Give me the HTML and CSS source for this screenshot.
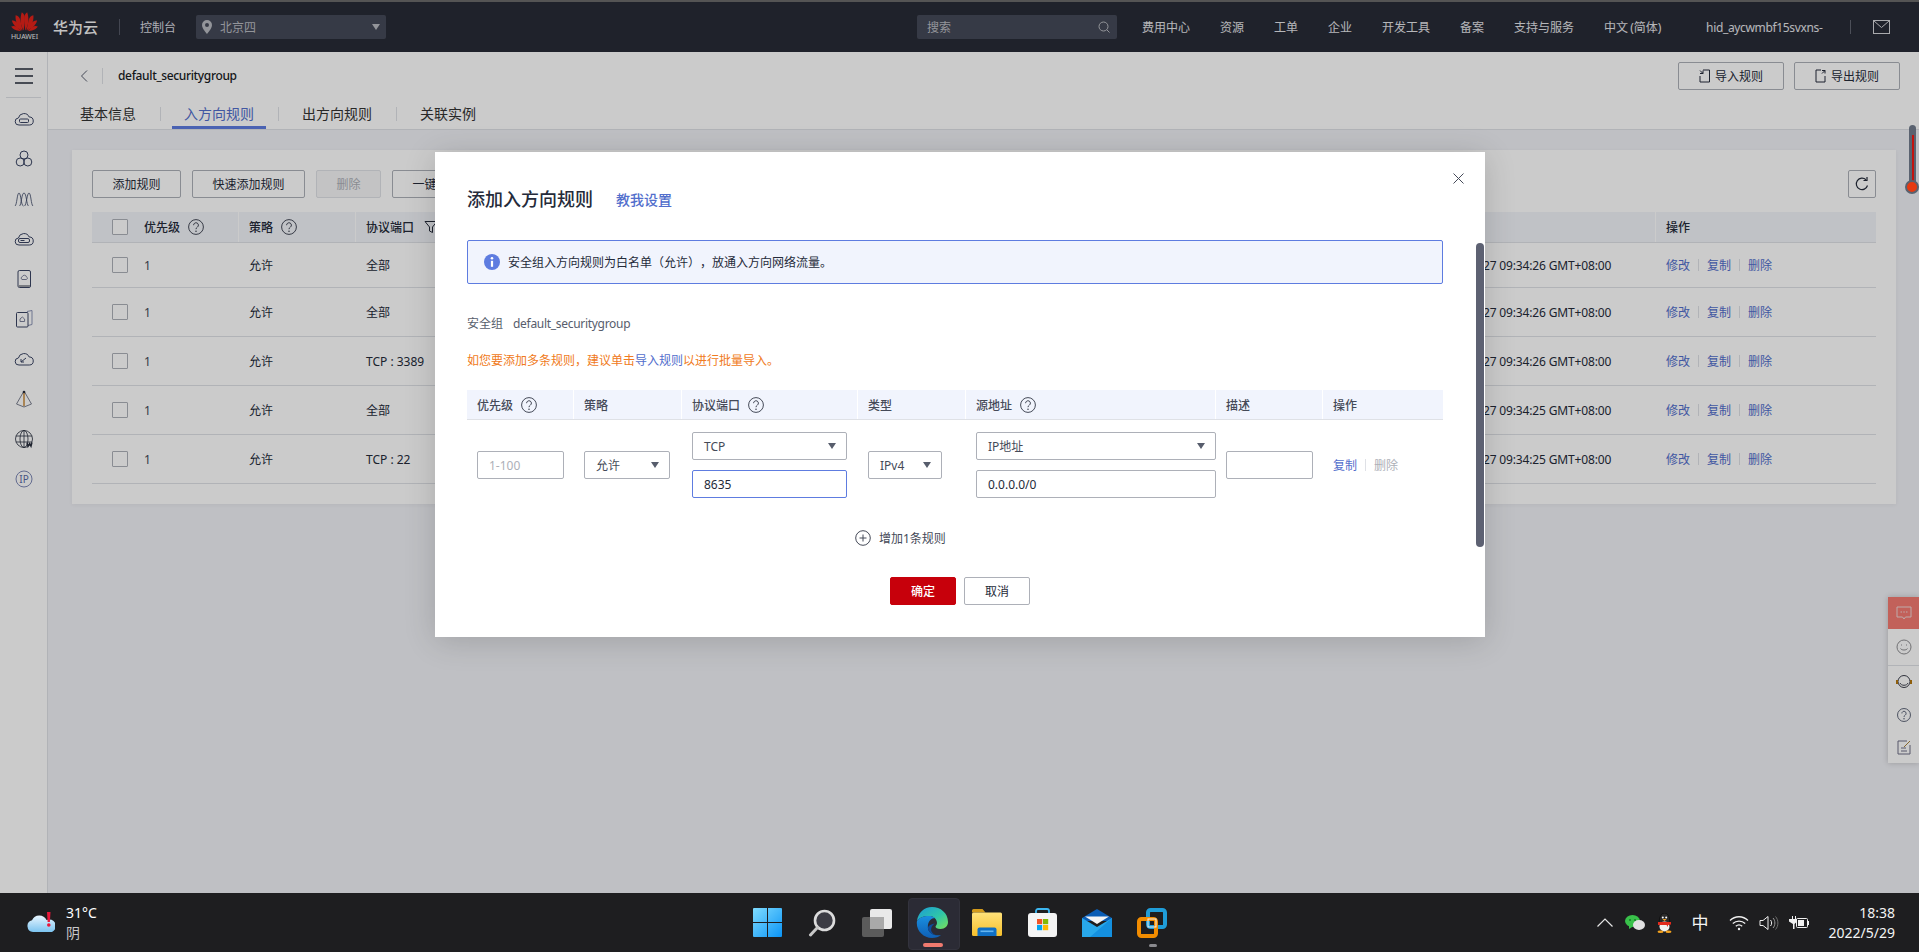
FILE: index.html
```html
<!DOCTYPE html>
<html lang="zh-CN">
<head>
<meta charset="utf-8">
<title>添加入方向规则</title>
<link rel="stylesheet" href="styles.css">
</head>
<body>
<svg class="defs" aria-hidden="true">
  <symbol id="help" viewBox="0 0 16 16"><circle cx="8" cy="8" r="7.400" fill="none" stroke="currentColor"/><path d="M5.600 6.200a2.400 2.400 0 1 1 3.800 1.900c-.9.600-1.400 1.100-1.400 2.100" fill="none" stroke="currentColor"/><circle cx="8" cy="12.200" r=".8" fill="currentColor"/></symbol>
  <symbol id="cloud" viewBox="0 0 20 20"><path d="M5 16a3.500 3.500 0 0 1-.6-7A5.700 5.700 0 0 1 15.200 8a4 4 0 0 1 .1 8z" fill="none" stroke="currentColor"/></symbol>
</svg>
<div class="app">
  <header class="topbar">
    <div class="brand">
      <div class="logo">
        <svg width="27" height="20" viewBox="0 0 27 20">
          <g fill="#e2231a">
            <path d="M12.600 19.500C9.500 14 8.600 8 10.800 1.200c2.200 1.200 3.200 4 3 7-.2 4-.7 8-1.200 11.300z"/>
            <path d="M14.400 19.500c3.100-5.500 4-11.500 1.800-18.300-2.200 1.200-3.200 4-3 7 .2 4 .7 8 1.200 11.300z"/>
            <path d="M11.600 19.500C7 15.700 4 11 4.600 4.200 7 4.500 8.700 6.500 9.300 9c.9 3.700 1.500 7.200 2.300 10.500z"/>
            <path d="M15.400 19.500C20 15.700 23 11 22.400 4.200 20 4.500 18.300 6.500 17.700 9c-.9 3.700-1.500 7.200-2.300 10.500z"/>
            <path d="M10.800 19.500C6.500 17.500 2.300 15 .9 9.500 3 9.200 5 10 6.500 12c1.800 2.500 3 5 4.300 7.500z"/>
            <path d="M16.200 19.500C20.500 17.500 24.700 15 26.100 9.500 24 9.200 22 10 20.500 12c-1.800 2.500-3 5-4.300 7.500z"/>
            <path d="M10 20C6.500 19.800 2.500 19 .2 15.500c2-.9 4-.6 5.800.7 1.500 1.100 2.800 2.500 4 3.800z"/>
            <path d="M17 20c3.500-.2 7.500-1 9.800-4.500-2-.9-4-.6-5.800.7-1.500 1.100-2.800 2.500-4 3.800z"/>
          </g>
        </svg>
        <span class="logo-text">HUAWEI</span>
      </div>
      <span class="brand-name">华为云</span>
      <span class="brand-sep"></span>
      <span class="console">控制台</span>
      <div class="region">
        <svg width="10" height="14" viewBox="0 0 10 14"><path d="M5 0a5 5 0 0 0-5 5c0 3.500 5 9 5 9s5-5.500 5-9a5 5 0 0 0-5-5zm0 7a2 2 0 1 1 0-4 2 2 0 0 1 0 4z" fill="#b9bbc2"/></svg>
        <span class="region-name">北京四</span>
        <i class="tri tri-light"></i>
      </div>
    </div>
    <div class="top-right">
      <div class="search">
        <span>搜索</span>
        <svg width="12" height="12" viewBox="0 0 12 12"><circle cx="5.500" cy="5.500" r="4.500" fill="none" stroke="#b9bbc2"/><path d="M8.800 8.800 11.500 11.500" stroke="#b9bbc2"/></svg>
      </div>
      <nav class="topnav">
        <span>费用中心</span><span>资源</span><span>工单</span><span>企业</span><span>开发工具</span><span>备案</span><span>支持与服务</span><span class="lang">中文 (简体)</span>
        <span class="user">hid_aycwmbf15svxns-</span>
        <i class="nav-sep"></i>
        <svg class="mail" width="17" height="14" viewBox="0 0 17 14"><rect x=".5" y=".5" width="16" height="13" fill="none" stroke="#d5d6da"/><path d="M1 1l7.500 6.500L16 1" fill="none" stroke="#d5d6da"/></svg>
      </nav>
    </div>
  </header>

  <div class="main">
    <aside class="sidebar">
      <svg class="burger" width="18" height="18" viewBox="0 0 18 18"><path d="M0 2h18M0 9h18M0 16h18" stroke="#252b3a" stroke-width="1.600"/></svg>
      <div class="side-sep"></div>
      <div class="side-item"><svg width="20" height="20" viewBox="0 0 20 20"><use href="#cloud"/><rect x="5.500" y="10" width="9" height="3.500" rx="1" fill="none" stroke="currentColor"/></svg></div>
      <div class="side-item"><svg width="20" height="20" viewBox="0 0 20 20" fill="none" stroke="currentColor"><circle cx="10" cy="6" r="4"/><circle cx="6.200" cy="13" r="4"/><circle cx="13.800" cy="13" r="4"/></svg></div>
      <div class="side-item"><svg width="20" height="20" viewBox="0 0 20 20" fill="none" stroke="currentColor" stroke-width=".8"><path d="M1 17C3 16 3 4 5 4s2 13 4.500 13"/><path d="M5.500 17C7.500 16 7.500 4 10 4s2.500 12 4.500 13"/><path d="M10.500 17C12.500 16 13 4 15 4s2 12 4 13"/></svg></div>
      <div class="side-item"><svg width="20" height="20" viewBox="0 0 20 20"><use href="#cloud"/><rect x="4.500" y="9.500" width="11" height="4" rx="1.500" fill="none" stroke="currentColor"/><path d="M6.500 11.500h4" stroke="currentColor"/></svg></div>
      <div class="side-item"><svg width="20" height="20" viewBox="0 0 20 20"><rect x="4" y="1.500" width="12.500" height="17" rx="1.500" fill="none" stroke="currentColor"/><path d="M4.500 16h11.500v2H4.500z" fill="#9a9ca3"/><path d="M8 10.500a1.500 1.500 0 0 1 .3-2.800 2.200 2.200 0 0 1 4.200.2 1.400 1.400 0 0 1 0 2.600z" fill="none" stroke="#7b809a"/></svg></div>
      <div class="side-item"><svg width="20" height="20" viewBox="0 0 20 20" fill="none"><path d="M13 2.500l5-1v14l-4 1" stroke="#8a93b5"/><rect x="2.500" y="3.500" width="11.500" height="14.500" rx="1" stroke="currentColor"/><path d="M6 12.500V10l2.300-2 2.300 2v2.500z" stroke="#7b809a"/></svg></div>
      <div class="side-item"><svg width="20" height="20" viewBox="0 0 20 20"><use href="#cloud"/><path d="M7 13l5-4M7 10v3h3" fill="none" stroke="currentColor"/></svg></div>
      <div class="side-item"><svg width="20" height="20" viewBox="0 0 20 20" fill="none"><path d="M10 2 2.500 15l7.500 3 7.500-3z" stroke="#7b8090"/><path d="M10 2v15" stroke="#c88a3a" stroke-width="1.500"/><circle cx="10" cy="3" r="1.300" fill="#252b3a"/></svg></div>
      <div class="side-item"><svg width="20" height="20" viewBox="0 0 20 20" fill="none" stroke="#252b3a" stroke-width=".8"><circle cx="10" cy="10" r="8.500"/><ellipse cx="10" cy="10" rx="4" ry="8.500"/><path d="M2 7h16M2 13h16M10 1.500v17"/><path d="M13 13.500l1 4 1.500-3 1.500 3 1-4" stroke-width="1.300"/></svg></div>
      <div class="side-item"><svg width="20" height="20" viewBox="0 0 20 20"><circle cx="10" cy="10" r="8" fill="none" stroke="#7d88b5"/><text x="10" y="13.500" text-anchor="middle" class="ip-text">IP</text></svg></div>
    </aside>

    <main class="content">
      <div class="page-head">
        <div class="page-title-row">
          <svg class="back" width="8" height="12" viewBox="0 0 8 12"><path d="M7 .5 1.500 6 7 11.500" fill="none" stroke="#575d6c"/></svg>
          <i class="title-sep"></i>
          <span class="page-title">default_securitygroup</span>
          <div class="head-actions">
            <button class="btn btn-icon"><svg width="11" height="14" viewBox="0 0 11 14" fill="none" stroke="#252b3a"><path d="M4 1h6.500v12H1V7"/><path d="M1 1.500l3 3M4 1.500v3H1"/></svg>导入规则</button>
            <button class="btn btn-icon"><svg width="11" height="14" viewBox="0 0 11 14" fill="none" stroke="#252b3a"><path d="M6 1H1v12h9V7"/><path d="M10 1.500l-3 3M7 1.500h3v3"/></svg>导出规则</button>
          </div>
        </div>
        <div class="tabs">
          <span class="tab">基本信息</span>
          <span class="tab tab-active">入方向规则</span>
          <span class="tab">出方向规则</span>
          <span class="tab">关联实例</span>
        </div>
      </div>
      <div class="page-body">
        <section class="card">
          <div class="toolbar">
            <button class="btn btn-add">添加规则</button>
            <button class="btn btn-quick">快速添加规则</button>
            <button class="btn btn-off">删除</button>
            <button class="btn btn-more">一键放通</button>
            <button class="btn btn-refresh"><svg width="14" height="14" viewBox="0 0 14 14" fill="none" stroke="#252b3a" stroke-width="1.200"><path d="M12.500 8.500A5.700 5.700 0 1 1 11 2.800"/><path d="M8.500 3.500h3.500V0"/></svg></button>
          </div>
          <div class="tbl">
            <div class="tr th">
              <div class="td td-first"><i class="chk"></i><span>优先级</span><svg class="q"><use href="#help"/></svg></div>
              <div class="td"><span>策略</span><svg class="q"><use href="#help"/></svg></div>
              <div class="td"><span>协议端口</span><svg class="funnel" width="14" height="14" viewBox="0 0 14 14"><path d="M1 1.500h12L8.500 7v5.500l-3-1.500V7z" fill="none" stroke="#252b3a"/></svg></div>
              <div class="td"></div>
              <div class="td"><span>操作</span></div>
            </div>
            <div class="tr tr-a">
              <div class="td td-first"><i class="chk"></i><span class="num">1</span></div>
              <div class="td">允许</div><div class="td">全部</div>
              <div class="td td-time">2022/05/27 09:34:26 GMT+08:00</div>
              <div class="td ops"><a>修改</a><i></i><a>复制</a><i></i><a>删除</a></div>
            </div>
            <div class="tr">
              <div class="td td-first"><i class="chk"></i><span class="num">1</span></div>
              <div class="td">允许</div><div class="td">全部</div>
              <div class="td td-time">2022/05/27 09:34:26 GMT+08:00</div>
              <div class="td ops"><a>修改</a><i></i><a>复制</a><i></i><a>删除</a></div>
            </div>
            <div class="tr">
              <div class="td td-first"><i class="chk"></i><span class="num">1</span></div>
              <div class="td">允许</div><div class="td">TCP : 3389</div>
              <div class="td td-time">2022/05/27 09:34:26 GMT+08:00</div>
              <div class="td ops"><a>修改</a><i></i><a>复制</a><i></i><a>删除</a></div>
            </div>
            <div class="tr">
              <div class="td td-first"><i class="chk"></i><span class="num">1</span></div>
              <div class="td">允许</div><div class="td">全部</div>
              <div class="td td-time">2022/05/27 09:34:25 GMT+08:00</div>
              <div class="td ops"><a>修改</a><i></i><a>复制</a><i></i><a>删除</a></div>
            </div>
            <div class="tr">
              <div class="td td-first"><i class="chk"></i><span class="num">1</span></div>
              <div class="td">允许</div><div class="td">TCP : 22</div>
              <div class="td td-time">2022/05/27 09:34:25 GMT+08:00</div>
              <div class="td ops"><a>修改</a><i></i><a>复制</a><i></i><a>删除</a></div>
            </div>
          </div>
        </section>
      </div>
    </main>
  </div>

  <div class="float-panel">
    <div class="float-top"><svg width="16" height="15" viewBox="0 0 16 15" fill="none" stroke="#f0d8d6"><path d="M1 1h14v10H9.500L8 13l-1.500-2H1z"/><path d="M4.500 6h1.500M7.300 6h1.500M10 6h1.500" stroke-width="1.200"/></svg></div>
    <div class="float-item float-line"><svg width="16" height="16" viewBox="0 0 16 16" fill="none" stroke="#8f8f92"><circle cx="8" cy="8" r="7"/><path d="M4.500 9.500c1 2 6 2 7 0M5 6h1M10 6h1"/></svg></div>
    <div class="float-item"><svg width="18" height="16" viewBox="0 0 18 16" fill="none" stroke="#3c3f4c"><circle cx="9" cy="7.500" r="6"/><path d="M5 9c1 3 7 3 8 0"/><path d="M2 6v4M16 6v4" stroke="#b4760e" stroke-width="2"/></svg></div>
    <div class="float-item"><svg class="q-float"><use href="#help"/></svg></div>
    <div class="float-item"><svg width="14" height="15" viewBox="0 0 14 15" fill="none" stroke="#6e6e86"><path d="M13 5v9H1V1h9"/><path d="M4 8h5M4 11h6" /><path d="M7 7l6-6" stroke="#a7803a"/></svg></div>
  </div>

  <div class="scrim"></div>

  <section class="modal">
    <svg class="modal-close" width="11" height="11" viewBox="0 0 11 11"><path d="M.5.500l10 10M10.500.500l-10 10" stroke="#454a58"/></svg>
    <div class="modal-scroll"></div>
    <div class="modal-head">
      <h2>添加入方向规则</h2>
      <a class="teach">教我设置</a>
    </div>
    <div class="alert">
      <svg width="16" height="16" viewBox="0 0 16 16"><circle cx="8" cy="8" r="8" fill="#5e7ce0"/><circle cx="8" cy="4.300" r="1.300" fill="#fff"/><rect x="6.900" y="6.800" width="2.200" height="6" fill="#fff"/></svg>
      <span>安全组入方向规则为白名单（允许），放通入方向网络流量。</span>
    </div>
    <div class="sg-row"><span>安全组</span><span class="sg-name">default_securitygroup</span></div>
    <p class="tip">如您要添加多条规则，建议单击<a>导入规则</a>以进行批量导入。</p>
    <div class="m-head">
      <div class="m-cell m-first">优先级<svg class="q"><use href="#help"/></svg></div>
      <div class="m-cell">策略</div>
      <div class="m-cell">协议端口<svg class="q"><use href="#help"/></svg></div>
      <div class="m-cell">类型</div>
      <div class="m-cell">源地址<svg class="q"><use href="#help"/></svg></div>
      <div class="m-cell">描述</div>
      <div class="m-cell">操作</div>
    </div>
    <div class="m-row">
      <div class="m-col m-first"><input class="ctl w87 ph" placeholder="1-100"></div>
      <div class="m-col"><div class="ctl sel w86"><span class="sel-a">允许</span><i class="tri"></i></div></div>
      <div class="m-col m-stack">
        <div class="ctl sel w155"><span>TCP</span><i class="tri"></i></div>
        <input class="ctl w155 focus" value="8635">
      </div>
      <div class="m-col"><div class="ctl sel w74"><span>IPv4</span><i class="tri"></i></div></div>
      <div class="m-col m-stack">
        <div class="ctl sel w240"><span>IP地址</span><i class="tri"></i></div>
        <input class="ctl w240" value="0.0.0.0/0">
      </div>
      <div class="m-col"><input class="ctl w87"></div>
      <div class="m-col m-ops"><a>复制</a><i></i><span>删除</span></div>
    </div>
    <div class="add-row">
      <svg width="16" height="16" viewBox="0 0 16 16" fill="none" stroke="#454a58"><circle cx="8" cy="8" r="7.300"/><path d="M4.500 8h7M8 4.500v7"/></svg>
      <span>增加1条规则</span>
    </div>
    <div class="modal-foot">
      <button class="btn btn-ok">确定</button>
      <button class="btn btn-cancel">取消</button>
    </div>
  </section>

  <div class="thermo"><i></i><b></b></div>
</div>

<footer class="taskbar">
  <div class="weather">
    <svg width="28" height="22" viewBox="0 0 28 22">
      <defs><linearGradient id="wc" x1="0" y1="0" x2="0" y2="1"><stop offset="0" stop-color="#e8f6ff"/><stop offset="1" stop-color="#7cc4f0"/></linearGradient></defs>
      <path d="M26 19H7a6 6 0 0 1-1-11.800A8 8 0 0 1 20.500 7 6 6 0 0 1 26 19z" transform="translate(-1 1)" fill="url(#wc)"/>
      <path d="M20 0h3.500l-.6 10h-2.300z" fill="#e8173a"/><circle cx="21.800" cy="13" r="1.800" fill="#e8173a"/>
    </svg>
    <div class="w-text"><span class="w-temp">31°C</span><span class="w-cond">阴</span></div>
  </div>
  <div class="apps">
    <div class="app-slot">
      <svg width="29" height="29" viewBox="0 0 29 29">
        <defs><linearGradient id="wa" x1="0" y1="0" x2="1" y2="1"><stop offset="0" stop-color="#7fdcff"/><stop offset="1" stop-color="#0b94f5"/></linearGradient></defs>
        <path d="M1 0h13v14H0V1a1 1 0 0 1 1-1zM15 0h13a1 1 0 0 1 1 1v13H15zM0 15h14v14H1a1 1 0 0 1-1-1zM15 15h14v13a1 1 0 0 1-1 1H15z" fill="url(#wa)"/>
      </svg>
    </div>
    <div class="app-slot">
      <svg width="28" height="28" viewBox="0 0 28 28"><circle cx="16.500" cy="11.500" r="9.500" fill="#3c3c44" stroke="#dcdcdc" stroke-width="2.600"/><path d="M9.500 18.500 2.500 26" stroke="#c8c8c8" stroke-width="3" stroke-linecap="round"/></svg>
    </div>
    <div class="app-slot">
      <svg width="30" height="28" viewBox="0 0 30 28"><rect x="0" y="8" width="22" height="20" rx="2" fill="#5b5b5b"/><rect x="8" y="0" width="22" height="20" rx="2" fill="#e9e9e9"/><rect x="8" y="8" width="14" height="12" fill="#a9a9a9"/></svg>
    </div>
    <div class="app-slot app-active">
      <svg width="32" height="31" viewBox="0 0 32 31">
        <defs>
          <linearGradient id="ea" x1="0" y1="0" x2="1" y2="1"><stop offset="0" stop-color="#1b9bd8"/><stop offset=".55" stop-color="#2fc6a8"/><stop offset="1" stop-color="#7ae05a"/></linearGradient>
          <linearGradient id="eb" x1="0" y1="0" x2="0" y2="1"><stop offset="0" stop-color="#1a8fe0"/><stop offset="1" stop-color="#0f5fb5"/></linearGradient>
        </defs>
        <path d="M1 14C2 6 8 0 16 0c8.500 0 16 6 16 15 0 4-3 7-7.500 7-3.200 0-5-1.200-5-2.500 0-.9 1.500-1.300 1.500-3.500C21 12.500 18 9 13 9 7 9 3 11 1 14z" fill="url(#ea)"/>
        <path d="M1 14c-1.500 9 6 17 15 17 3.500 0 7-1.200 9-3-5 1-12-.5-13-6.500C11 15 15 11 19 11c-2-1.500-4-2-6-2C7 9 3 11 1 14z" fill="url(#eb)"/>
        <path d="M12 21.500c1 6 8 7.500 13 6.500-3 1-8 0-9.500-3.500-1-2.500 0-6 3.500-8-4 .5-7.500 2.500-7 5z" fill="#0d4c9c"/>
      </svg>
      <i class="app-bar"></i>
    </div>
    <div class="app-slot">
      <svg width="30" height="27" viewBox="0 0 30 27">
        <defs><linearGradient id="fa" x1="0" y1="0" x2="0" y2="1"><stop offset="0" stop-color="#ffe27a"/><stop offset="1" stop-color="#f6bf2c"/></linearGradient></defs>
        <path d="M0 1.500A1.500 1.500 0 0 1 1.500 0h9l3 3.500H0z" fill="#d39a1a"/>
        <rect x="0" y="3.500" width="30" height="23.500" rx="1.500" fill="url(#fa)"/>
        <path d="M5.500 27v-6.500a2 2 0 0 1 2-2h15a2 2 0 0 1 2 2V27z" fill="#0f6fc4"/><rect x="8.500" y="21.500" width="13" height="1.600" fill="#63b5f0"/>
      </svg>
    </div>
    <div class="app-slot">
      <svg width="29" height="29" viewBox="0 0 29 29">
        <path d="M8 6V3a2 2 0 0 1 2-2h9a2 2 0 0 1 2 2v3" fill="none" stroke="#3cb6f0" stroke-width="1.800"/>
        <rect x="0" y="5" width="29" height="24" rx="3" fill="#f4f4f4"/>
        <rect x="9" y="11" width="5.200" height="5.200" fill="#f05325"/><rect x="15" y="11" width="5.200" height="5.200" fill="#82ba06"/><rect x="9" y="17" width="5.200" height="5.200" fill="#02a4ef"/><rect x="15" y="17" width="5.200" height="5.200" fill="#ffb902"/>
      </svg>
    </div>
    <div class="app-slot">
      <svg width="30" height="28" viewBox="0 0 30 28">
        <path d="M0 9 15 0l15 9v3H0z" fill="#0b5db5"/>
        <path d="M3 7.500h24L15 15z" fill="#f5f5f5"/>
        <path d="M0 9l15 9 15-9v19H0z" fill="#28a8ea"/><path d="M30 28H8l22-19z" fill="#1490df"/>
      </svg>
    </div>
    <div class="app-slot">
      <svg width="30" height="30" viewBox="0 0 30 30" fill="none">
        <rect x="11" y="2" width="17" height="17" rx="2.500" stroke="#1f9dd9" stroke-width="4"/>
        <rect x="2" y="11" width="17" height="17" rx="2.500" stroke="#f28c00" stroke-width="4"/>
        <rect x="11" y="11" width="8" height="8" stroke="#f0f0f0" stroke-width="1"/>
      </svg>
      <i class="app-dot"></i>
    </div>
  </div>
  <div class="tray">
    <div class="tray-group">
      <svg width="16" height="9" viewBox="0 0 16 9"><path d="M.5 8.500 8 1l7.500 7.500" fill="none" stroke="#e6e6e6" stroke-width="1.200"/></svg>
      <svg width="20" height="16" viewBox="0 0 20 16"><ellipse cx="7.500" cy="6" rx="7.500" ry="6" fill="#39c14a"/><path d="M4 10v4l4-2.500z" fill="#39c14a"/><ellipse cx="14" cy="10" rx="6" ry="5" fill="#e2e2e2"/><circle cx="5" cy="5" r="1" fill="#167a26"/><circle cx="10" cy="5" r="1" fill="#167a26"/></svg>
      <svg width="15" height="20" viewBox="0 0 15 20"><ellipse cx="7.500" cy="8" rx="5.200" ry="8" fill="#2a2a2a" stroke="#000" stroke-width=".5"/><ellipse cx="7.500" cy="13.500" rx="5" ry="5" fill="#f2f2f2"/><circle cx="5.800" cy="4.500" r="1" fill="#fff"/><circle cx="9.200" cy="4.500" r="1" fill="#fff"/><path d="M5.500 6h4L7.500 8z" fill="#f4a21d"/><path d="M1 9h13v2.500l-3 .5v2l-1.500-2H1z" fill="#e22a1d"/><ellipse cx="3.500" cy="18.800" rx="3" ry="1.200" fill="#f4a21d"/><ellipse cx="11.500" cy="18.800" rx="3" ry="1.200" fill="#f4a21d"/></svg>
    </div>
    <span class="ime">中</span>
    <div class="tray-group tray-sys">
      <svg width="20" height="16" viewBox="0 0 20 16" fill="none" stroke="#f0f0f0" stroke-width="1.300"><path d="M1 5.500c5-5 13-5 18 0M3.800 8.500c3.500-3.300 9-3.300 12.400 0M6.800 11.200c1.800-1.500 4.600-1.500 6.400 0"/><circle cx="10" cy="14" r="1.200" fill="#f0f0f0" stroke="none"/></svg>
      <svg width="20" height="16" viewBox="0 0 20 16" fill="none" stroke="#f0f0f0"><path d="M1 5.500h3L9 1.500v13l-5-4H1z"/><path d="M11.500 5c1.500 1.500 1.500 4.500 0 6"/><path d="M14 3c2.500 2.500 2.500 7.500 0 10" stroke="#9a9a9a"/><path d="M16.500 1.500c3.200 3.500 3.200 9.500 0 13" stroke="#6e6e6e"/></svg>
      <svg width="20" height="16" viewBox="0 0 20 16"><path d="M0 4h3V1h1v3h2V1h1v3h1v2.500L5.500 9v5H4V9L0 6.500z" fill="#f0f0f0"/><rect x="7.500" y="3.500" width="11" height="9" rx="1" fill="none" stroke="#f0f0f0"/><rect x="9" y="5" width="6" height="6" fill="#f0f0f0"/><rect x="18.800" y="6" width="1.200" height="4" fill="#f0f0f0"/></svg>
    </div>
    <div class="clock"><span>18:38</span><span>2022/5/29</span></div>
  </div>
</footer>
</body>
</html>
```

FILE: styles.css
```css
* { box-sizing: border-box; }
html, body { margin: 0; height: 952px; overflow: hidden; }
body {
  font-family: "Noto Sans", "Noto Sans CJK SC", sans-serif;
  font-size: 12px;
  color: #252b3a;
  text-spacing-trim: space-all;
  display: flex;
  flex-direction: column;
}
.defs { display: none; }
a { color: #526ecc; }
i { font-style: normal; }

.app { position: relative; height: 893px; display: flex; flex-direction: column; background: #f0f1f6; }

/* top bar */
.topbar {
  height: 52px;
  flex: none;
  background: #282b37;
  border-top: 2px solid #6a6a6a;
  color: #e4e5e9;
  display: flex;
  align-items: center;
  justify-content: space-between;
}
.brand { display: flex; align-items: center; padding-left: 11px; }
.logo { width: 27px; display: flex; flex-direction: column; align-items: center; margin-top: -2px; }
.logo-text { font-size: 7px; line-height: 8px; margin-top: 2px; color: #f0f0f0; white-space: nowrap; }
.brand-name { margin-left: 15px; font-size: 15px; font-weight: 500; line-height: 20px; color: #f4f4f4; }
.brand-sep { width: 1px; height: 16px; background: #555966; margin: 0 20px 0 21px; }
.console { width: 36px; white-space: nowrap; color: #dcdde2; }
.region {
  margin-left: 20px; width: 190px; height: 24px; border-radius: 2px; background: #454a58;
  display: flex; align-items: center; padding: 0 6px; color: #b9bbc2;
}
.region-name { margin-left: 8px; flex: 1; }
.tri { width: 0; height: 0; border-left: 4px solid transparent; border-right: 4px solid transparent; border-top: 6px solid #575d6c; display: block; }
.tri-light { border-top-color: #b9bbc2; margin-right: 0; }
.top-right { width: 1002px; display: flex; align-items: center; }
.search {
  width: 200px; height: 24px; border-radius: 2px; background: #454a58; color: #b9bbc2;
  display: flex; align-items: center; justify-content: space-between; padding: 0 7px 0 10px;
}
.topnav { display: flex; align-items: center; gap: 30px; margin-left: 25px; white-space: nowrap; }
.lang { width: 65px; word-spacing: -1px; }
.user { margin-left: 7px; width: 119px; letter-spacing: -.35px; }
.nav-sep { width: 1px; height: 14px; background: #60646f; margin-left: -5px; }
.mail { margin-left: -8px; }

/* layout */
.main { flex: 1; display: flex; min-height: 0; }
.sidebar { width: 48px; flex: none; background: #fff; border-right: 1px solid #dfe1e6; display: flex; flex-direction: column; align-items: center; padding-top: 15px; color: #3a4564; }
.burger { flex: none; }
.side-sep { width: 35px; height: 1px; background: #dfe1e6; margin: 12px 0 1px; flex: none; }
.side-item { height: 40px; width: 100%; flex: none; display: flex; align-items: center; justify-content: center; }
.ip-text { font-size: 10px; fill: #5a6aa5; font-family: "Noto Sans", sans-serif; }
.content { flex: 1; min-width: 0; display: flex; flex-direction: column; }
.page-head { background: #fff; height: 78px; flex: none; border-bottom: 1px solid #dfe1e6; padding-top: 10px; }
.page-title-row { display: flex; align-items: center; height: 28px; padding: 0 19px 0 32px; }
.back { margin-right: 14px; }
.title-sep { width: 1px; height: 16px; background: #dfe1e6; margin-right: 15px; }
.page-title { font-weight: 500; letter-spacing: -.35px; color: #191c24; margin-top: -2px; }
.head-actions { margin-left: auto; display: flex; gap: 10px; }
.btn {
  height: 28px; font: inherit; color: #252b3a; background: #fff; border: 1px solid #adb0b8; border-radius: 2px;
  padding: 0; display: flex; align-items: center; justify-content: center; white-space: nowrap; flex: none;
}
.btn-icon { width: 106px; gap: 5px; }
.tabs { display: flex; gap: 24px; padding-left: 20px; margin-top: 10px; height: 29px; }
.tab { position: relative; padding: 0 12px; font-size: 14px; line-height: 27px; height: 29px; color: #333; }
.tab + .tab::before { content: ""; position: absolute; left: -12px; top: 7px; width: 1px; height: 14px; background: #dfe1e6; }
.tab-active { color: #526ecc; border-bottom: 3px solid #5e7ce0; }

.page-body { flex: 1; padding: 20px 23px 0 24px; }
.card { background: #fff; height: 354px; padding: 20px; box-shadow: 0 1px 4px rgba(0,0,0,.05); }
.toolbar { display: flex; gap: 11px; height: 28px; }
.btn-add { width: 89px; }
.btn-quick { width: 113px; }
.btn-off { width: 65px; color: #adb0b8; background: #f5f5f6; border-color: #dfe1e6; }
.btn-more { width: 89px; }
.btn-refresh { width: 28px; margin-left: auto; }

.tbl { margin-top: 14px; }
.tr {
  display: grid; grid-template-columns: 146px 117px 1fr 232px 221px;
  height: 49px; border-bottom: 1px solid #dfe1e6; align-items: center;
}
.tr-a { height: 45px; }
.th { height: 31px; background: #f2f4f9; font-weight: 500; color: #252b3a; }
.td { padding-left: 11px; display: flex; align-items: center; height: 100%; white-space: nowrap; }
.th .td + .td { border-left: 1px solid #fff; padding-left: 10px; }
.th .td:nth-child(4) { border-left: 0; }
.td-first { padding-left: 20px; }
.chk { width: 16px; height: 16px; border: 1px solid #adb0b8; background: #fff; margin-right: 16px; border-radius: 1px; flex: none; }
.q { width: 16px; height: 16px; margin-left: 8px; color: #454a58; flex: none; }
.num { color: #454a58; }
.funnel { margin-left: 10px; }
.td-time { letter-spacing: -.15px; }
.ops a { color: #526ecc; }
.ops i { width: 1px; height: 12px; background: #dfe1e6; margin: 0 8px; }

/* floating helper */
.float-panel { position: absolute; right: 0; top: 597px; width: 31px; height: 166px; background: #fff; box-shadow: 0 0 6px rgba(0,0,0,.2); }
.float-top { height: 32px; background: #f47a72; display: flex; align-items: center; justify-content: center; }
.float-item { height: 32.5px; display: flex; align-items: center; justify-content: center; }
.float-line { height: 37px; border-bottom: 1px solid #dfe1e6; }
.q-float { width: 14px; height: 14px; color: #4a5268; }

.scrim { position: absolute; inset: 0; background: rgba(0,0,0,.205); }

/* dialog */
.modal {
  position: absolute; left: 435px; top: 152px; width: 1050px; height: 485px; background: #fff;
  padding: 35px 42px 0 32px; box-shadow: 0 4px 30px rgba(0,0,0,.16);
}
.modal-close { position: absolute; left: 1018px; top: 21px; }
.modal-scroll { position: absolute; left: 1041px; top: 91px; width: 8px; height: 304px; border-radius: 4px; background: #5d6172; }
.modal-head { display: flex; align-items: center; height: 24px; }
.modal-head h2 { margin: 0; font-size: 18px; font-weight: 500; line-height: 24px; color: #252b3a; }
.teach { margin: -1px 0 0 23px; font-size: 14px; font-weight: 500; color: #526ecc; }
.alert {
  margin-top: 29px; height: 44px; background: #f1f4fd; border: 1px solid #5e7ce0; border-radius: 2px;
  display: flex; align-items: center; padding-left: 16px; gap: 8px;
}
.sg-row { margin-top: 30px; display: flex; gap: 10px; line-height: 20px; color: #575d6c; }
.sg-name { letter-spacing: -.3px; }
.tip { margin: 17px 0 0; line-height: 20px; color: #f07a21; }
.tip a { color: #526ecc; }
.m-head, .m-row { display: grid; grid-template-columns: 106px 108px 176px 108px 250px 107px 121px; }
.m-head { margin-top: 19px; height: 30px; background: #f1f4fd; border-bottom: 1px solid #dfe1e6; font-weight: 500; color: #454a58; }
.m-cell { padding-left: 10px; display: flex; align-items: center; border-left: 1px solid #fff; }
.m-cell.m-first { border-left: 0; }
.m-row { height: 66px; margin-top: 12px; }
.m-col { padding-left: 11px; display: flex; align-items: center; }
.m-col.m-first { padding-left: 10px; }
.m-stack { flex-direction: column; align-items: flex-start; justify-content: space-between; }
.ctl {
  height: 28px; border: 1px solid #adb0b8; border-radius: 2px; background: #fff; font: inherit; color: #252b3a;
  padding: 0 11px; outline: 0; flex: none; display: block; margin: 0;
}
.ph::placeholder { color: #adb0b8; opacity: 1; }
.focus { border-color: #5e7ce0; }
.sel { display: flex; align-items: center; justify-content: space-between; color: #454a58; padding-right: 10px; }
.w74 { width: 74px; } .w86 { width: 86px; } .w87 { width: 87px; } .w155 { width: 155px; } .w240 { width: 240px; }
.m-ops { font-size: 12px; }
.m-ops i { width: 1px; height: 12px; background: #dfe1e6; margin: 0 8px; }
.m-ops span { color: #adb0b8; }
.add-row { margin-top: 32px; margin-left: 388px; height: 16px; display: flex; align-items: center; gap: 8px; color: #454a58; }
.modal-foot { margin-top: 31px; margin-left: 423px; display: flex; gap: 8px; }
.btn-ok { width: 66px; background: #c7000b; border-color: #c7000b; color: #fff; font-weight: 500; }
.btn-cancel { width: 66px; }

.thermo { position: absolute; left: 1905px; top: 125px; width: 14px; height: 69px; }
.thermo i { position: absolute; left: 4px; top: 0; width: 7px; height: 62px; border-radius: 4px; background: #5a6270; }
.thermo i::after { content: ""; position: absolute; left: 2.5px; top: 10px; width: 2px; height: 46px; background: #c3130f; }
.thermo b { position: absolute; left: 0; top: 55px; width: 14px; height: 14px; border-radius: 50%; background: #e63a12; border: 2px solid #5a6270; }

/* taskbar */
.taskbar {
  height: 59px; flex: none; background: #1e1e20; display: grid; grid-template-columns: 1fr auto 1fr; align-items: center;
  color: #fff; font-size: 14px;
}
.weather { display: flex; align-items: center; padding-left: 27px; gap: 11px; }
.w-text { display: flex; flex-direction: column; line-height: 20px; }
.w-cond { color: #c8c8c8; }
.apps { display: flex; height: 59px; }
.app-slot { position: relative; width: 55px; height: 59px; display: flex; align-items: center; justify-content: center; }
.app-active::before { content: ""; position: absolute; left: 3px; top: 5px; width: 50px; height: 50px; background: #2b2b35; border-radius: 4px; border: 1px solid #33333d; }
.app-active svg { position: relative; }
.app-bar { position: absolute; left: 18px; top: 50px; width: 20px; height: 4px; border-radius: 2px; background: #f07a6f; }
.app-dot { position: absolute; left: 24px; top: 51px; width: 8px; height: 3px; border-radius: 2px; background: #8a8a8e; }
.tray { display: flex; align-items: center; justify-content: flex-end; gap: 20px; padding-right: 24px; }
.tray-group { display: flex; align-items: center; gap: 12px; }
.tray-sys { gap: 10px; }
.ime { font-size: 17px; width: 17px; line-height: 20px; color: #f4f4f4; }
.clock { display: flex; flex-direction: column; align-items: flex-end; line-height: 20px; color: #f4f4f4; }
```
